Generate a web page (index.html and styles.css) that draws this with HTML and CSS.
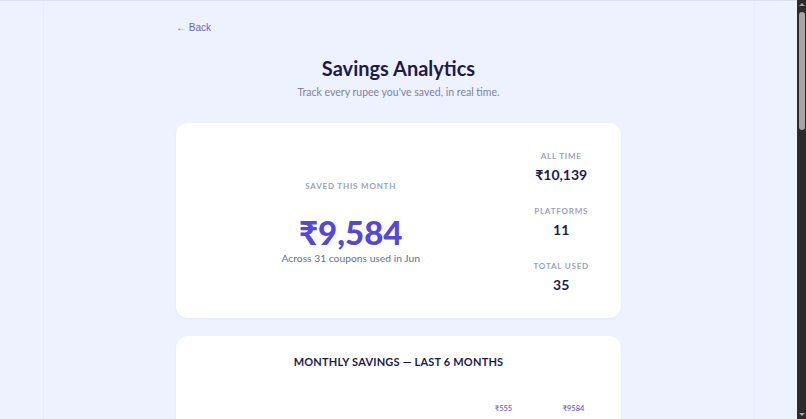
FILE: index.html
```html
<!DOCTYPE html>
<html lang="en">
<head>
    <meta charset="UTF-8">
    <meta name="viewport" content="width=device-width, initial-scale=1.0">
    <title>Savings Analytics</title>
    <link rel="stylesheet" href="styles.css">
</head>
<body>
    <div class="page">
        <main class="wrap">
            <a class="back" href="#">&larr; Back</a>

            <header class="head">
                <h1>Savings Analytics</h1>
                <p>Track every rupee you've saved, in real time.</p>
            </header>

            <!-- This month summary -->
            <section class="card hero">
                <div class="hero-main">
                    <div class="eyebrow">Saved this month</div>
                    <div class="big">₹9,584</div>
                    <div class="caption">Across 31 coupons used in Jun</div>
                </div>
                <div class="stats">
                    <div class="stat">
                        <div class="eyebrow">All time</div>
                        <div class="stat-value">₹10,139</div>
                    </div>
                    <div class="stat">
                        <div class="eyebrow">Platforms</div>
                        <div class="stat-value">11</div>
                    </div>
                    <div class="stat">
                        <div class="eyebrow">Total used</div>
                        <div class="stat-value">35</div>
                    </div>
                </div>
            </section>

            <!-- Monthly chart -->
            <section class="card chart-card">
                <h2>Monthly savings &mdash; last 6 months</h2>
                <div class="chart">
                    <div class="col">
                        <span class="amt"></span>
                        <div class="bar-slot"><div class="bar" style="height: 0%"></div></div>
                        <span class="month">Jan</span>
                    </div>
                    <div class="col">
                        <span class="amt"></span>
                        <div class="bar-slot"><div class="bar" style="height: 0%"></div></div>
                        <span class="month">Feb</span>
                    </div>
                    <div class="col">
                        <span class="amt"></span>
                        <div class="bar-slot"><div class="bar" style="height: 0%"></div></div>
                        <span class="month">Mar</span>
                    </div>
                    <div class="col">
                        <span class="amt"></span>
                        <div class="bar-slot"><div class="bar" style="height: 0%"></div></div>
                        <span class="month">Apr</span>
                    </div>
                    <div class="col">
                        <span class="amt">₹555</span>
                        <div class="bar-slot"><div class="bar" style="height: 5.8%"></div></div>
                        <span class="month">May</span>
                    </div>
                    <div class="col">
                        <span class="amt">₹9584</span>
                        <div class="bar-slot"><div class="bar" style="height: 100%"></div></div>
                        <span class="month">Jun</span>
                    </div>
                </div>
            </section>

            <!-- Platform breakdown -->
            <section class="card list-card">
                <h2>Top platforms</h2>
                <ul class="rows">
                    <li class="row"><span>Swiggy</span><span class="row-amt">₹3,240</span></li>
                    <li class="row"><span>Zomato</span><span class="row-amt">₹2,115</span></li>
                    <li class="row"><span>Amazon</span><span class="row-amt">₹1,480</span></li>
                    <li class="row"><span>Myntra</span><span class="row-amt">₹1,102</span></li>
                    <li class="row"><span>Flipkart</span><span class="row-amt">₹864</span></li>
                    <li class="row"><span>BigBasket</span><span class="row-amt">₹510</span></li>
                    <li class="row"><span>Others</span><span class="row-amt">₹828</span></li>
                </ul>
            </section>

            <!-- Recent coupons -->
            <section class="card list-card">
                <h2>Recent coupons</h2>
                <ul class="rows">
                    <li class="row"><span>SWIGGYIT &middot; 28 Jun</span><span class="row-amt">₹120</span></li>
                    <li class="row"><span>ZOMPRO50 &middot; 27 Jun</span><span class="row-amt">₹150</span></li>
                    <li class="row"><span>AMZSAVE &middot; 25 Jun</span><span class="row-amt">₹400</span></li>
                    <li class="row"><span>MYNTRA300 &middot; 22 Jun</span><span class="row-amt">₹300</span></li>
                    <li class="row"><span>FKBIG &middot; 20 Jun</span><span class="row-amt">₹250</span></li>
                </ul>
            </section>

            <!-- Categories -->
            <section class="card list-card">
                <h2>By category</h2>
                <ul class="rows">
                    <li class="row"><span>Food delivery</span><span class="row-amt">₹5,355</span></li>
                    <li class="row"><span>Fashion</span><span class="row-amt">₹2,206</span></li>
                    <li class="row"><span>Electronics</span><span class="row-amt">₹1,480</span></li>
                    <li class="row"><span>Groceries</span><span class="row-amt">₹1,098</span></li>
                </ul>
            </section>
        </main>
    </div>

    <!-- window scrollbar as it appears in the capture -->
    <div class="scrollbar" aria-hidden="true">
        <span class="sb-up"></span>
        <span class="sb-thumb"></span>
        <span class="sb-down"></span>
    </div>
</body>
</html>
```

FILE: styles.css
```css
html {
    background-color: #eef2ff;
}

body {
    margin: 0;
    padding-right: 9px;
    font-family: 'Lato', 'Noto Sans', sans-serif;
    color: #1e1b4b;
    border-top: 1px solid #dde2f0;
}

.page {
    max-width: 710px;
    margin: 0 auto;
    border-left: 1px solid #e8ecfa;
    border-right: 1px solid #e8ecfa;
}

.wrap {
    max-width: 445px;
    margin: 0 auto;
    padding: 19px 0 40px;
}

.back {
    display: block;
    width: fit-content;
    font-family: 'Liberation Sans', Arial, sans-serif;
    font-size: 10px;
    line-height: 16px;
    color: #6a5fd1;
    text-decoration: none;
}

.head {
    text-align: center;
    margin: 17px 0 22px;
}

.head h1 {
    margin: 0;
    font-size: 20px;
    line-height: 30px;
    font-weight: 700;
    color: #1e1b4b;
}

.head p {
    margin: 0;
    font-size: 10.5px;
    line-height: 18px;
    color: #7c83a3;
}

.card {
    background-color: #ffffff;
    border-radius: 12px;
    box-shadow: 0 1px 3px rgba(30, 27, 75, 0.04);
    margin-bottom: 18px;
}

/* Hero summary */
.hero {
    display: grid;
    grid-template-columns: 1fr auto;
    column-gap: 40px;
    padding: 27px 32px 23px;
}

.hero-main {
    align-self: center;
    text-align: center;
}

.eyebrow {
    font-size: 8px;
    line-height: 13px;
    font-weight: 700;
    letter-spacing: 0.8px;
    text-transform: uppercase;
    color: #9aa1bb;
}

.big {
    margin-top: 20px;
    font-size: 33px;
    line-height: 38px;
    font-weight: 900;
    color: #5548d9;
}

.caption {
    font-size: 10.3px;
    line-height: 15px;
    color: #6b7088;
}

.stats {
    display: flex;
    flex-direction: column;
    gap: 20px;
    text-align: center;
}

.stat-value {
    margin-top: 1px;
    font-size: 14px;
    line-height: 21px;
    font-weight: 700;
    color: #1e1b4b;
}

/* Chart */
.chart-card {
    padding: 18px 24px 24px;
}

.chart-card h2,
.list-card h2 {
    margin: 0;
    text-align: center;
    font-size: 11px;
    line-height: 16px;
    font-weight: 700;
    letter-spacing: 0.2px;
    text-transform: uppercase;
    color: #1e1b4b;
}

.chart {
    display: grid;
    grid-template-columns: repeat(6, 1fr);
    column-gap: 23px;
    margin-top: 32px;
}

.col {
    display: flex;
    flex-direction: column;
    align-items: center;
}

.amt {
    height: 14px;
    font-size: 7.5px;
    line-height: 14px;
    font-weight: 600;
    color: #6a5fd1;
}

.bar-slot {
    width: 100%;
    height: 220px;
    margin-top: 4px;
    display: flex;
    align-items: flex-end;
    border-bottom: 1px solid #e6e9f5;
}

.bar {
    width: 100%;
    background-color: #6a5fd1;
    border-radius: 6px 6px 0 0;
}

.month {
    margin-top: 8px;
    font-size: 10px;
    color: #7c83a3;
}

/* Lists */
.list-card {
    padding: 20px 28px 12px;
}

.rows {
    list-style: none;
    margin: 16px 0 0;
    padding: 0;
}

.row {
    display: flex;
    justify-content: space-between;
    padding: 12px 0;
    border-top: 1px solid #eef0f8;
    font-size: 12px;
    color: #4b5070;
}

.row-amt {
    font-weight: 700;
    color: #1e1b4b;
}

/* Scrollbar strip */
.scrollbar {
    position: fixed;
    top: 0;
    right: 0;
    width: 9px;
    height: 100%;
    background-color: #2b2b2b;
    display: flex;
    flex-direction: column;
    align-items: center;
}

.sb-up,
.sb-down {
    width: 0;
    height: 0;
    border-left: 3px solid transparent;
    border-right: 3px solid transparent;
}

.sb-up {
    margin-top: 3px;
    border-bottom: 3px solid #a3a3a3;
}

.sb-thumb {
    width: 6px;
    height: 118px;
    margin-top: 6px;
    border-radius: 3px;
    background-color: #a6a6a6;
}

.sb-down {
    margin-top: auto;
    margin-bottom: 3px;
    border-top: 3px solid #a3a3a3;
}
```
